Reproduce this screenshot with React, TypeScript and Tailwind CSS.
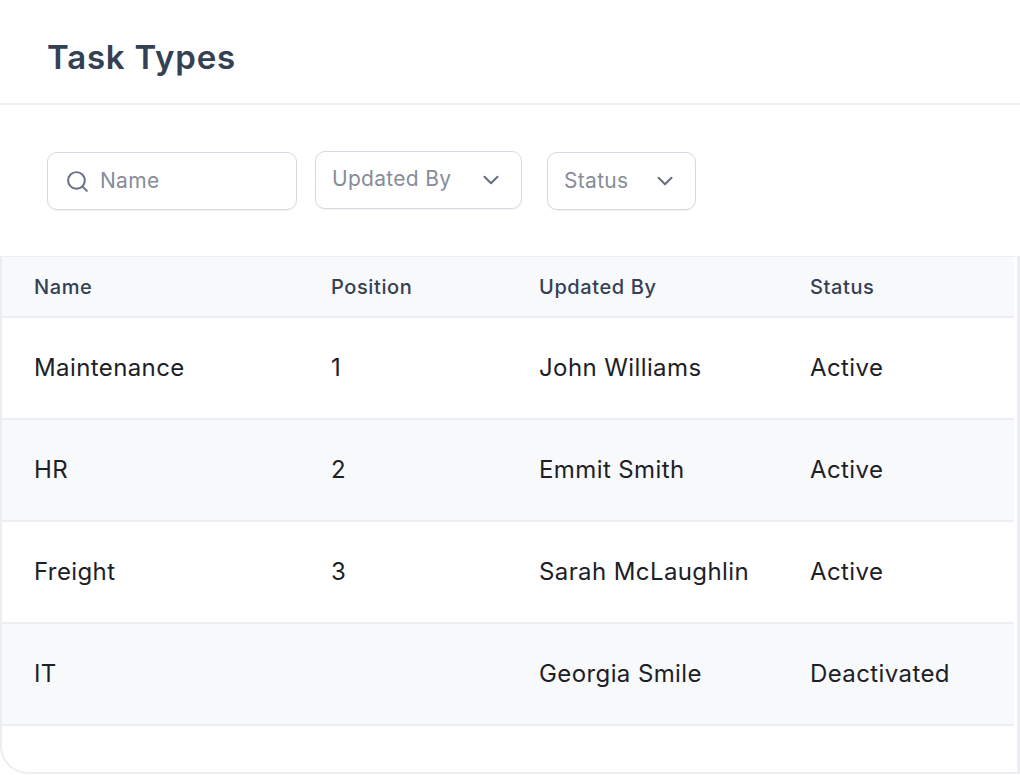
import { ChevronDown, Search } from "lucide-react";

const rows = [
  { name: "Maintenance", position: "1", updatedBy: "John Williams", status: "Active" },
  { name: "HR", position: "2", updatedBy: "Emmit Smith", status: "Active" },
  { name: "Freight", position: "3", updatedBy: "Sarah McLaughlin", status: "Active" },
  { name: "IT", position: "", updatedBy: "Georgia Smile", status: "Deactivated" },
];

const font = { fontFamily: '"Inter", "Liberation Sans", sans-serif' };

export default function App() {
  return (
    <div className="h-[775px] w-[1020px] overflow-hidden bg-white" style={font}>
      <div className="flex h-[105px] items-start border-b-2 border-[#eceef2] pl-[47px] pt-[36px]">
        <h1 className="text-[33px] font-semibold leading-[42px] tracking-[0.8px] text-[#344054]">Task Types</h1>
      </div>

      <div className="flex h-[151px] items-start pl-[47px] pt-[46px]">
        <div className="mt-px flex h-[58px] w-[250px] items-center rounded-[10px] border-[1.5px] border-[#d5d9e2] pl-[17px] shadow-[0_1px_1px_rgba(16,24,40,0.05)]">
          <Search className="h-[25px] w-[25px] text-[#667085]" strokeWidth={1.9} />
          <span className="ml-[10px] text-[21px] tracking-[0.3px] text-[#878d98]">Name</span>
        </div>
        <div className="ml-[18px] flex h-[58px] w-[207px] items-center justify-between rounded-[10px] border-[1.5px] border-[#d5d9e2] pl-[16px] pr-[17px] shadow-[0_1px_1px_rgba(16,24,40,0.05)]">
          <span className="mt-[-2px] text-[21px] tracking-[0.3px] text-[#878d98]">Updated By</span>
          <ChevronDown className="h-[26px] w-[26px] text-[#667085]" strokeWidth={1.9} />
        </div>
        <div className="ml-[25px] mt-px flex h-[58px] w-[149px] items-center justify-between rounded-[10px] border-[1.5px] border-[#d5d9e2] pl-[16px] pr-[17px] shadow-[0_1px_1px_rgba(16,24,40,0.05)]">
          <span className="text-[21px] tracking-[0.3px] text-[#878d98]">Status</span>
          <ChevronDown className="h-[26px] w-[26px] text-[#667085]" strokeWidth={1.9} />
        </div>
      </div>

      <div className="h-[518px] rounded-bl-[28px] border-2 border-t border-r-[3px] border-[#eceef2] pr-[3px]">
        <div className="grid h-[61px] grid-cols-[296px_208px_271px_1fr] items-center border-b-2 border-[#eceef2] bg-[#f8f9fb] text-[20px] font-medium tracking-[0.6px] text-[#344054]">
          <span className="pl-[32px]">Name</span>
          <span className="pl-[33px]">Position</span>
          <span className="pl-[33px]">Updated By</span>
          <span className="pl-[33px]">Status</span>
        </div>
        {rows.map((row, i) => (
          <div
            key={row.name}
            className={
              i % 2 === 1
                ? "grid h-[102px] grid-cols-[296px_208px_271px_1fr] items-center border-b-2 border-[#eceef2] bg-[#f8f9fb] text-[24px] tracking-[0.4px] text-[#1d2127]"
                : "grid h-[102px] grid-cols-[296px_208px_271px_1fr] items-center border-b-2 border-[#eceef2] bg-white text-[24px] tracking-[0.4px] text-[#1d2127]"
            }
          >
            <span className="pl-[32px]">{row.name}</span>
            <span className="pl-[33px]">{row.position}</span>
            <span className="pl-[33px]">{row.updatedBy}</span>
            <span className="pl-[33px]">{row.status}</span>
          </div>
        ))}
      </div>
    </div>
  );
}
